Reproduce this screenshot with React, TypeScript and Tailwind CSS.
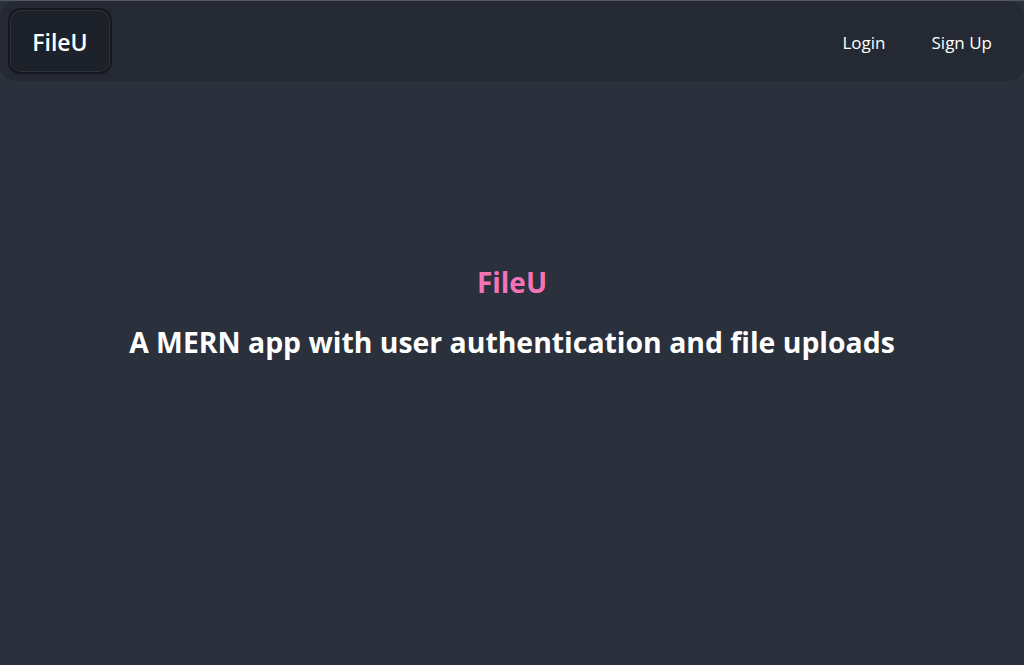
export default function App() {
  return (
    <div className="min-h-[665px] bg-[#2a303c] border-t border-[#55575c] font-['Open_Sans',sans-serif]">
      <nav className="flex h-[80px] items-center justify-between rounded-2xl bg-[#242933] px-2">
        <button className="flex h-[66px] w-[104px] items-center justify-center rounded-xl border-2 border-[#16181d] bg-[#1d2129] pt-[2px] text-[23px] font-semibold text-white shadow-[inset_0_0_0_1px_#2c313a]">
          FileU
        </button>
        <div className="flex items-center gap-[46px] pr-[24px] pt-[3px] text-[17px] text-white">
          <a>Login</a>
          <a>Sign Up</a>
        </div>
      </nav>
      <main className="flex flex-col items-center pt-[181px] text-center">
        <h2 className="text-[28px] font-bold leading-[40px] text-[#f472b6]">FileU</h2>
        <h1 className="mt-[20px] text-[28.4px] font-bold leading-[40px] text-white">
          A MERN app with user authentication and file uploads
        </h1>
      </main>
    </div>
  )
}
